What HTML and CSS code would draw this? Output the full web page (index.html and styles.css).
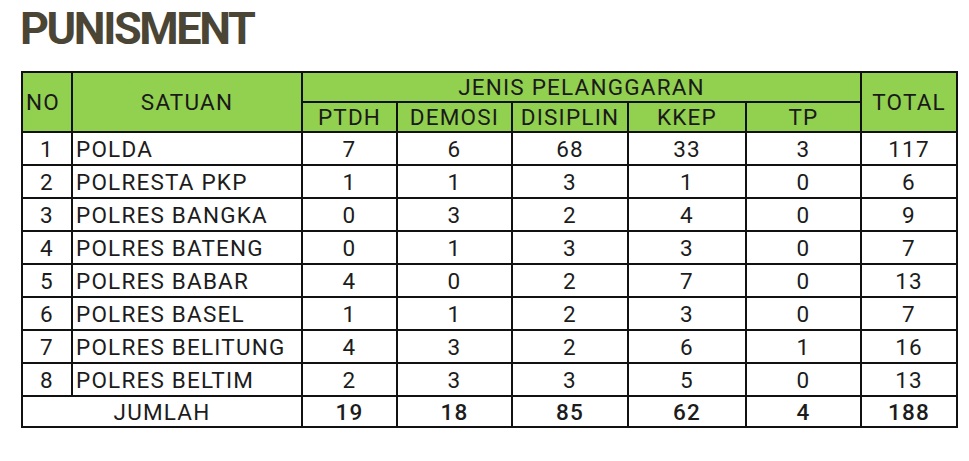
FILE: index.html
```html
<!DOCTYPE html>
<html>
<head>
<meta charset="utf-8">
<link rel="stylesheet" href="styles.css">
</head>
<body>
<h1 class="title">PUNISMENT</h1>
<table class="grid">
  <colgroup>
    <col class="c-no"><col class="c-satuan"><col class="c-ptdh"><col class="c-demosi"><col class="c-disiplin"><col class="c-kkep"><col class="c-tp"><col class="c-total">
  </colgroup>
  <thead>
    <tr class="h1">
      <th rowspan="2" class="no-h">NO</th>
      <th rowspan="2">SATUAN</th>
      <th colspan="5">JENIS PELANGGARAN</th>
      <th rowspan="2">TOTAL</th>
    </tr>
    <tr class="h2">
      <th>PTDH</th><th>DEMOSI</th><th>DISIPLIN</th><th>KKEP</th><th>TP</th>
    </tr>
  </thead>
  <tbody>
    <tr><td>1</td><td class="name">POLDA</td><td>7</td><td>6</td><td>68</td><td>33</td><td>3</td><td>117</td></tr>
    <tr><td>2</td><td class="name">POLRESTA PKP</td><td>1</td><td>1</td><td>3</td><td>1</td><td>0</td><td>6</td></tr>
    <tr><td>3</td><td class="name">POLRES BANGKA</td><td>0</td><td>3</td><td>2</td><td>4</td><td>0</td><td>9</td></tr>
    <tr><td>4</td><td class="name">POLRES BATENG</td><td>0</td><td>1</td><td>3</td><td>3</td><td>0</td><td>7</td></tr>
    <tr><td>5</td><td class="name">POLRES BABAR</td><td>4</td><td>0</td><td>2</td><td>7</td><td>0</td><td>13</td></tr>
    <tr><td>6</td><td class="name">POLRES BASEL</td><td>1</td><td>1</td><td>2</td><td>3</td><td>0</td><td>7</td></tr>
    <tr><td>7</td><td class="name">POLRES BELITUNG</td><td>4</td><td>3</td><td>2</td><td>6</td><td>1</td><td>16</td></tr>
    <tr><td>8</td><td class="name">POLRES BELTIM</td><td>2</td><td>3</td><td>3</td><td>5</td><td>0</td><td>13</td></tr>
    <tr class="sum"><td colspan="2" class="sum-label">JUMLAH</td><td>19</td><td>18</td><td>85</td><td>62</td><td>4</td><td>188</td></tr>
  </tbody>
</table>
</body>
</html>
```

FILE: styles.css
```css
html, body {
  margin: 0;
  padding: 0;
  background: #ffffff;
}
body {
  font-family: Roboto, "Liberation Sans", sans-serif;
  color: #1c1c1c;
  width: 969px;
  height: 461px;
  overflow: hidden;
}
.title {
  margin: 0;
  padding: 3px 0 0 20px;
  height: 68px;
  box-sizing: border-box;
  font-family: Roboto, sans-serif;
  font-weight: 700;
  font-size: 45px;
  line-height: 52px;
  letter-spacing: -2.4px;
  color: #4a4535;
}
.grid {
  margin-left: 21px;
  margin-top: 3px;
  width: 935px;
  table-layout: fixed;
  border-collapse: collapse;
  border: 2px solid #111;
  font-size: 22.5px;
  letter-spacing: 1.2px;
}
.c-no { width: 50px; }
.c-satuan { width: 230px; }
.c-ptdh { width: 95px; }
.c-demosi { width: 115px; }
.c-disiplin { width: 116px; }
.c-kkep { width: 118px; }
.c-tp { width: 115px; }
.c-total { width: 96px; }
th, td {
  border: 2px solid #111;
  padding: 0;
  text-align: center;
  vertical-align: middle;
  font-weight: 400;
  white-space: nowrap;
  overflow: hidden;
}
th {
  background: #92d050;
  color: #1a1a1a;
}
.h1 th { height: 28px; line-height: 27px; }
.h2 th { height: 28px; line-height: 27px; }
.no-h { text-align: left; padding-left: 3px; }
tbody td { height: 31px; line-height: 30px; }
td.name { text-align: left; padding-left: 3px; }
.sum td { height: 29px; line-height: 28px; font-weight: 500; }
.sum td.sum-label { font-weight: 400; }
```
